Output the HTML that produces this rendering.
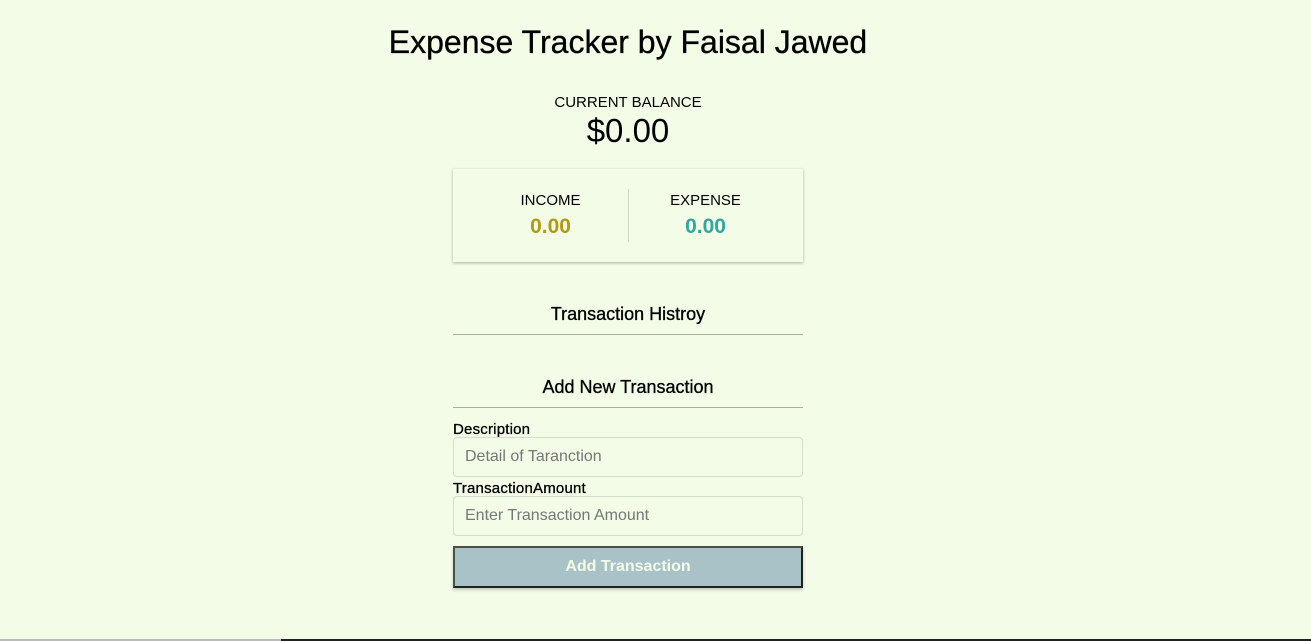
<!DOCTYPE html>
<html><head><style>
html,body{margin:0;padding:0;width:1311px;height:641px;overflow:hidden;background:#f2fce6;font-family:"Liberation Sans",sans-serif;color:#000;position:relative}
.a{position:absolute;white-space:nowrap}
.c{left:453px;width:350px;text-align:center}
h1{position:absolute;left:0;width:1256px;text-align:center;top:24px;margin:0;font-size:32px;font-weight:normal;letter-spacing:0px}
.card{position:absolute;left:453px;top:169px;width:350px;height:93px;box-shadow:0 1px 3px rgba(0,0,0,0.3);background:#f2fce6}
.div{position:absolute;left:175px;top:20px;width:1px;height:53px;background:#d4d8cc}
.line{position:absolute;left:453px;width:350px;height:1px;background:#a8aca4}
.inp{position:absolute;left:453px;border:1px solid #d6dccc;border-radius:4px;background:#f2fce6;font-size:16px;color:#777;line-height:38px;padding-left:11px;box-sizing:border-box;width:350px;height:40px}
.btn{position:absolute;left:453px;top:546px;width:350px;height:42px;box-sizing:border-box;border:2px solid #222;border-top-color:#4a504a;border-left-color:#4a504a;background:#a9c2c7;color:#f2fce6;font-weight:bold;font-size:16px;text-align:center;line-height:38px;box-shadow:0 2px 3px rgba(0,0,0,0.2)}
.m{-webkit-text-stroke:0.3px #000}
</style></head><body>
<h1 class="m">Expense Tracker by Faisal Jawed</h1>
<div class="a c" style="top:94px;font-size:15px">CURRENT BALANCE</div>
<div class="a c" style="top:112px;font-size:33px">$0.00</div>
<div class="card">
<div class="a" style="left:0;width:195px;text-align:center;top:23px;font-size:15px">INCOME</div>
<div class="a" style="left:0;width:195px;text-align:center;top:46px;font-size:21px;font-weight:bold;color:#b29a12">0.00</div>
<div class="div"></div>
<div class="a" style="left:175px;width:155px;text-align:center;top:23px;font-size:15px">EXPENSE</div>
<div class="a" style="left:175px;width:155px;text-align:center;top:46px;font-size:21px;font-weight:bold;color:#2fa8a0">0.00</div>
</div>
<div class="a c m" style="top:304px;font-size:18px">Transaction Histroy</div>
<div class="line" style="top:334px"></div>
<div class="a c m" style="top:377px;font-size:18px">Add New Transaction</div>
<div class="line" style="top:407px"></div>
<div class="a m" style="left:453px;top:421px;font-size:15px;letter-spacing:0.2px">Description</div>
<div class="inp" style="top:437px">Detail of Taranction</div>
<div class="a m" style="left:453px;top:480px;font-size:15px;letter-spacing:0.2px">TransactionAmount</div>
<div class="inp" style="top:496px">Enter Transaction Amount</div>
<div class="btn">Add Transaction</div>
<div class="a" style="left:0;top:639px;width:281px;height:2px;background:#bbb"></div>
<div class="a" style="left:281px;top:639px;width:1030px;height:2px;background:#222"></div>
</body></html>
